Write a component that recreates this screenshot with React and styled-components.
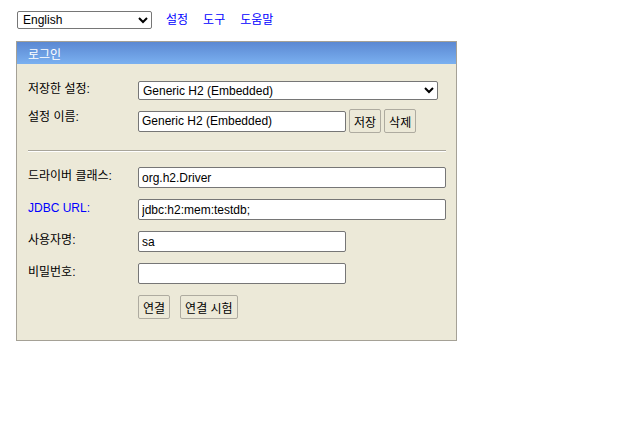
import React from 'react';
import styled, {createGlobalStyle} from 'styled-components';

const GlobalStyle = createGlobalStyle`
    html, body {
        margin: 0;
        padding: 0;
        background: #ffffff;
    }
    body {
        font-family: "Liberation Sans", Arial, "Noto Sans CJK KR", sans-serif;
        font-size: 12px;
        color: #000000;
    }
`;

const Page = styled.div`
    padding: 11px 0 0 16px;
`;
const TopBar = styled.div`
    display: flex;
    align-items: center;
    height: 18px;
    margin-left: 1px;
`;
const LangSelect = styled.select`
    width: 135px;
    height: 18px;
    padding: 0 0 0 1px;
    margin: 0 14px 0 0;
    border: 1px solid #767676;
    border-radius: 2px;
    background: #ffffff;
    font-family: inherit;
    font-size: 12px;
    color: #000000;
`;
const NavLink = styled.a`
    color: #0000ff;
    text-decoration: none;
    margin-right: 15px;
    font-size: 12px;
    line-height: 18px;
`;
const Panel = styled.div`
    width: 439px;
    margin-top: 12px;
    border: 1px solid #a5a196;
    background: #ece9d8;
`;
const PanelHeader = styled.div`
    height: 22px;
    padding-left: 11px;
    display: flex;
    align-items: center;
    color: #ffffff;
    background: linear-gradient(to bottom, #5b88d2, #7ab0f0);
`;
const PanelBody = styled.div`
    padding: 17px 10px 21px 11px;
    display: flex;
    flex-direction: column;
`;
const Row = styled.div`
    display: grid;
    grid-template-columns: 110px 1fr;
    align-items: start;
    margin-bottom: ${p => p.$gap ?? 11}px;
`;
const Label = styled.div`
    padding-top: ${p => p.$top ?? 2}px;
    color: ${p => (p.$link ? '#0000ff' : '#000000')};
    line-height: 14px;
`;
const Field = styled.div`
    display: flex;
    align-items: center;
    gap: 3px;
`;
const Select = styled.select`
    box-sizing: border-box;
    width: 300px;
    height: 19px;
    padding: 0;
    border: 1px solid #767676;
    border-radius: 2px;
    background: #ffffff;
    font-family: inherit;
    font-size: 12px;
    color: #000000;
`;
const Input = styled.input`
    box-sizing: border-box;
    width: ${p => (p.$wide ? 308 : 208)}px;
    height: 21px;
    padding: 0 3px;
    border: 1px solid #767676;
    border-radius: 2px;
    background: #ffffff;
    font-family: inherit;
    font-size: 12px;
    color: #000000;
    outline: none;
`;
const Button = styled.button`
    box-sizing: border-box;
    height: 24px;
    padding: 0 4px;
    border: 1px solid #aeaba0;
    border-radius: 2px;
    background: #ece9d8;
    font-family: inherit;
    font-size: 12px;
    color: #000000;
`;
const Divider = styled.hr`
    margin: 17px 0 15px 0;
    border: none;
    border-top: 1px solid #a8a59a;
    border-bottom: 1px solid #ffffff;
    height: 0;
`;
const ButtonBar = styled.div`
    display: flex;
    gap: 10px;
`;

const App = () => {
  return (
    <Page>
      <GlobalStyle/>
      <TopBar>
        <LangSelect defaultValue="en">
          <option value="en">English</option>
        </LangSelect>
        <NavLink href="#">설정</NavLink>
        <NavLink href="#">도구</NavLink>
        <NavLink href="#">도움말</NavLink>
      </TopBar>
      <Panel>
        <PanelHeader>로그인</PanelHeader>
        <PanelBody>
          <Row $gap={9}>
            <Label $top={1}>저장한 설정:</Label>
            <Field>
              <Select defaultValue="h2">
                <option value="h2">Generic H2 (Embedded)</option>
              </Select>
            </Field>
          </Row>
          <Row $gap={0}>
            <Label $top={1}>설정 이름:</Label>
            <Field>
              <Input defaultValue="Generic H2 (Embedded)"/>
              <Button>저장</Button>
              <Button>삭제</Button>
            </Field>
          </Row>
          <Divider/>
          <Row>
            <Label>드라이버 클래스:</Label>
            <Field><Input $wide defaultValue="org.h2.Driver"/></Field>
          </Row>
          <Row>
            <Label $link>JDBC URL:</Label>
            <Field><Input $wide defaultValue="jdbc:h2:mem:testdb;"/></Field>
          </Row>
          <Row>
            <Label>사용자명:</Label>
            <Field><Input defaultValue="sa"/></Field>
          </Row>
          <Row>
            <Label>비밀번호:</Label>
            <Field><Input type="password"/></Field>
          </Row>
          <Row $gap={0}>
            <Label/>
            <ButtonBar>
              <Button>연결</Button>
              <Button>연결 시험</Button>
            </ButtonBar>
          </Row>
        </PanelBody>
      </Panel>
    </Page>
  );
};

export default App;
